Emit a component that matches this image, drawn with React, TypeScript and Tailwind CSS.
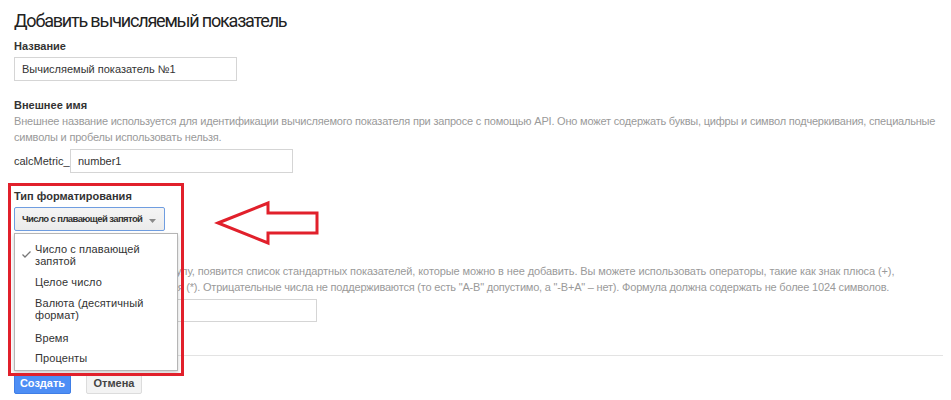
import React from "react";

const F = { fontFamily: '"Liberation Sans", Arial, sans-serif' };

export default function App() {
  return (
    <div
      className="relative w-[951px] h-[400px] overflow-hidden bg-white text-[#333]"
      style={F}
    >
      <div className="flex flex-col pl-[14px]">
        <h1
          className="mt-[9px] text-[18px] leading-[24px] text-[#222] tracking-[-1.2px]"
          style={{ fontFamily: "Roboto, Arial, sans-serif", fontWeight: 400 }}
        >
          Добавить вычисляемый показатель
        </h1>

        <div className="mt-[6px] text-[11px] leading-[14px] font-bold text-[#333]">Название</div>
        <div className="mt-[4px] w-[223px] h-[24px] border border-[#d5d5d5] flex items-center px-[7px] text-[11px] text-[#333]">
          Вычисляемый показатель №1
        </div>

        <div className="mt-[17px] text-[11px] leading-[14px] font-bold text-[#333]">Внешнее имя</div>
        <div className="mt-[1px] text-[11px] leading-[16px] text-[#9a9a9a] tracking-[-0.2px]">
          <div className="whitespace-nowrap">
            Внешнее название используется для идентификации вычисляемого показателя при запросе с помощью API. Оно может содержать буквы, цифры и символ подчеркивания, специальные
          </div>
          <div className="whitespace-nowrap">символы и пробелы использовать нельзя.</div>
        </div>
        <div className="mt-[4px] flex items-center gap-[1px]">
          <span className="text-[11px] text-[#333] w-[55px]">calcMetric_</span>
          <div className="w-[223px] h-[24px] border border-[#d5d5d5] flex items-center px-[7px] text-[11px] text-[#333]">
            number1
          </div>
        </div>

        <div className="mt-[16px] text-[11px] leading-[14px] font-bold text-[#333]">Тип форматирования</div>
        <div className="mt-[4px] w-[151px] h-[24px] rounded-[2px] border border-[#6f9de0] bg-gradient-to-b from-[#f5f5f5] to-[#ebebeb] flex items-center pl-[7px] pr-[8px] justify-between">
          <span className="whitespace-nowrap text-[9.5px] font-bold text-[#333] tracking-[-0.6px]">
            Число с плавающей запятой
          </span>
          <svg width="7" height="4" viewBox="0 0 7 4" className="mt-[3px]">
            <path d="M0 0 L7 0 L3.5 4 Z" fill="#8a8a8a" />
          </svg>
        </div>

        <div className="mt-[16px] text-[11px] leading-[14px] font-bold text-[#333]">Формула</div>
        <div className="mt-[2px] text-[11px] leading-[16px] text-[#9a9a9a]">
          <div className="whitespace-nowrap tracking-[-0.1px]">
            Когда вы начнете вводить формулу, появится список стандартных показателей, которые можно в нее добавить. Вы можете использовать операторы, такие как знак плюса (+),
          </div>
          <div className="whitespace-nowrap tracking-[-0.2px]">
            минус (-), деление (/) и умножения (*). Отрицательные числа не поддерживаются (то есть "A-B" допустимо, а "-B+A" – нет). Формула должна содержать не более 1024 символов.
          </div>
        </div>
        <div className="mt-[4px] w-[303px] h-[23px] border border-[#d5d5d5]" />

        <div className="mt-[33px] w-[929px] h-[1px] bg-[#e3e3e3]" />

        <div className="mt-[17px] flex gap-[15px]">
          <div className="w-[57px] h-[21px] rounded-[2px] bg-[#4d8ef5] border border-[#3f7ee6] flex items-center justify-center text-[11px] font-bold text-white">
            Создать
          </div>
          <div className="w-[56px] h-[21px] rounded-[2px] bg-[#f3f3f3] border border-[#dcdcdc] flex items-center justify-center text-[11px] font-bold text-[#444]">
            Отмена
          </div>
        </div>
      </div>

      {/* dropdown menu */}
      <div className="absolute left-[14px] top-[233px] w-[164px] h-[138px] bg-white border border-[#b5b5b5] shadow-[0_2px_4px_rgba(0,0,0,0.2)] text-[11px] leading-[12px] text-[#333] tracking-[0.1px]">
        <div className="relative pl-[20px] pt-[9px]">
          <svg width="9" height="7" viewBox="0 0 9 7" className="absolute left-[7px] top-[17px]">
            <path d="M0.5 3.5 L3 6 L8.5 0.5" fill="none" stroke="#777" strokeWidth="1.3" />
          </svg>
          <div>Число с плавающей</div>
          <div>запятой</div>
        </div>
        <div className="pl-[20px] mt-[9px]">Целое число</div>
        <div className="pl-[20px] mt-[9px]">
          <div>Валюта (десятичный</div>
          <div>формат)</div>
        </div>
        <div className="pl-[20px] mt-[11px]">Время</div>
        <div className="pl-[20px] mt-[8px]">Проценты</div>
      </div>

      {/* red annotation box */}
      <div className="absolute left-[8px] top-[183px] w-[176px] h-[193px] border-[3px] border-[#e1202b]" />

      {/* red arrow */}
      <svg
        className="absolute left-[214px] top-[200px]"
        width="108"
        height="48"
        viewBox="0 0 108 48"
      >
        <path
          d="M4 23 L54 3 L54 13 L103 13 L103 33 L54 33 L54 43 Z"
          fill="none"
          stroke="#e1202b"
          strokeWidth="3"
          strokeLinejoin="miter"
        />
      </svg>
    </div>
  );
}
